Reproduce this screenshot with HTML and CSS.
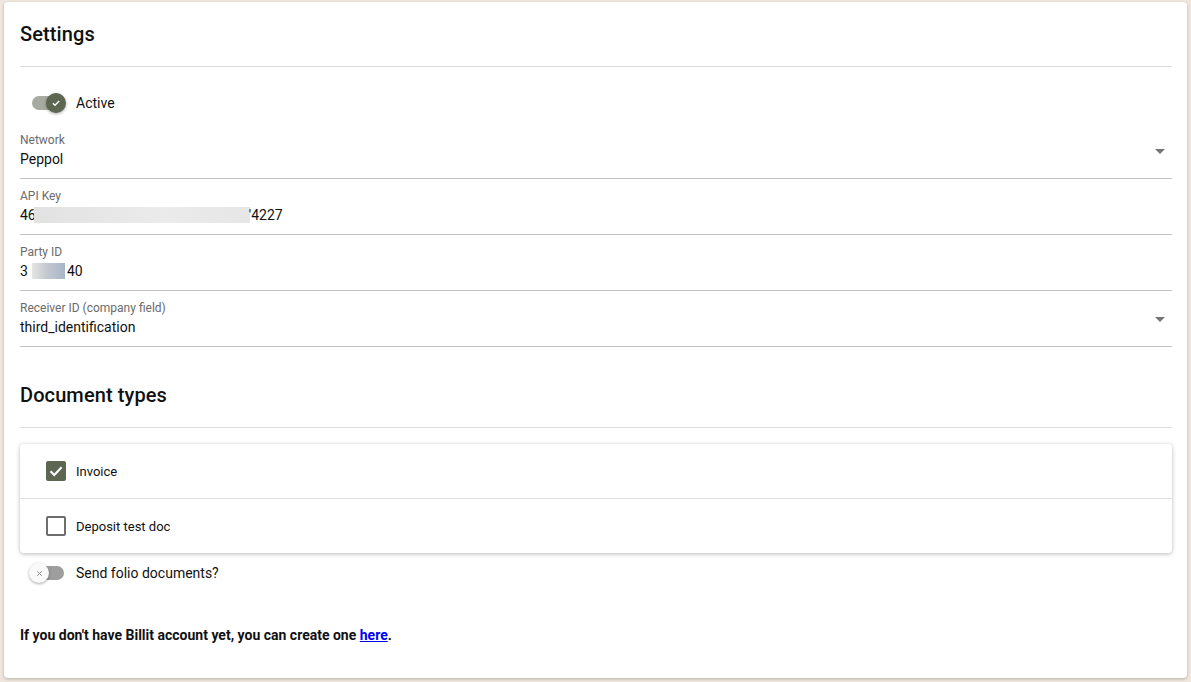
FILE: index.html
```html
<!DOCTYPE html>
<html>
<head>
<meta charset="utf-8">
<link rel="stylesheet" href="styles.css">
</head>
<body>
<div class="card">
  <h2 class="title">Settings</h2>
  <div class="divider"></div>

  <div class="toggle-row toggle-row-active">
    <span class="toggle on">
      <span class="track"></span>
      <span class="knob"><svg viewBox="0 0 12 12" width="10" height="10"><path d="M2.2 6.3 L4.8 8.8 L9.8 3.6" fill="none" stroke="#fff" stroke-width="1.6"/></svg></span>
    </span>
    <span class="toggle-label">Active</span>
  </div>

  <div class="field select">
    <div class="label">Network</div>
    <div class="value">Peppol</div>
    <span class="arrow"></span>
  </div>
  <div class="field">
    <div class="label">API Key</div>
    <div class="value">46<span class="blur blur-key"></span>'4227</div>
  </div>
  <div class="field">
    <div class="label">Party ID</div>
    <div class="value">3<span class="blur blur-party"></span>40</div>
  </div>
  <div class="field select">
    <div class="label">Receiver ID (company field)</div>
    <div class="value">third_identification</div>
    <span class="arrow"></span>
  </div>

  <h2 class="title title-docs">Document types</h2>
  <div class="divider"></div>

  <div class="list">
    <div class="list-row">
      <span class="checkbox checked"><svg viewBox="0 0 20 20" width="20" height="20"><path d="M4.5 10.2 L8.3 14 L15.6 6.3" fill="none" stroke="#fff" stroke-width="2"/></svg></span>
      <span class="list-label">Invoice</span>
    </div>
    <div class="list-row">
      <span class="checkbox"></span>
      <span class="list-label">Deposit test doc</span>
    </div>
  </div>

  <div class="toggle-row toggle-row-folio">
    <span class="toggle off">
      <span class="track"></span>
      <span class="knob"><svg viewBox="0 0 12 12" width="9" height="9"><path d="M3 3 L9 9 M9 3 L3 9" fill="none" stroke="#8a8a8a" stroke-width="1.3"/></svg></span>
    </span>
    <span class="toggle-label">Send folio documents?</span>
  </div>

  <p class="note">If you don't have Billit account yet, you can create one <a href="#">here</a>.</p>
</div>
</body>
</html>
```

FILE: styles.css
```css
* { box-sizing: border-box; }
html, body { margin: 0; padding: 0; }
body {
  background: #efe7de;
  font-family: Roboto, "Liberation Sans", sans-serif;
  color: #1a1a1a;
  padding: 2px 4px 4px 4px;
}
.card {
  background: #fff;
  border-radius: 4px;
  box-shadow: 0 1px 3px rgba(0,0,0,0.25);
  padding: 16px 15px 33px 16px;
  height: 676px;
}
.title {
  margin: 0 0 16px 0;
  font-size: 20px;
  font-weight: 500;
  line-height: 32px;
  color: #111;
  letter-spacing: 0.1px;
}
.title-docs { margin-top: 32px; }
.divider { height: 1px; background: #dedede; }

.toggle-row {
  display: flex;
  align-items: center;
  height: 24px;
}
.toggle-row-active { margin-top: 24px; margin-bottom: 8px; }
.toggle-row-folio { margin-top: 8px; }
.toggle {
  position: relative;
  width: 37px;
  height: 24px;
  margin-left: 9px;
  margin-right: 10px;
  flex: none;
}
.track {
  position: absolute;
  left: 3px;
  top: 5px;
  width: 32px;
  height: 14px;
  border-radius: 7px;
  background: #9e9e9e;
}
.toggle.on .track { background: #a7ab9f; }
.knob {
  position: absolute;
  top: 2px;
  width: 20px;
  height: 20px;
  border-radius: 50%;
  display: flex;
  align-items: center;
  justify-content: center;
  box-shadow: 0 1px 3px rgba(0,0,0,0.35);
}
.toggle.on .knob { left: 17px; background: #5c6651; }
.toggle.off .knob { left: 0; background: #fafafa; }
.toggle-label { font-size: 14px; line-height: 20px; color: #111; }

.field {
  position: relative;
  height: 56px;
  padding-top: 10px;
  border-bottom: 1px solid #c2c2c2;
}
.label {
  font-size: 12px;
  line-height: 14px;
  color: #6b6b6b;
}
.value {
  margin-top: 2px;
  font-size: 14px;
  line-height: 20px;
  color: #111;
  display: flex;
  align-items: center;
}
.blur { display: inline-block; height: 16px; }
.blur-key {
  width: 216px;
  margin-left: -2px;
  margin-right: -1px;
  background: linear-gradient(90deg, #e2e2e2, #ebebeb 60%, #e6e6e6);
}
.blur-party {
  width: 33px;
  margin-left: 4px;
  margin-right: 2px;
  background: linear-gradient(90deg, #e4e4e4, #c4c8ce 45%, #a7b6c9);
}
.arrow {
  position: absolute;
  right: 7px;
  top: 26px;
  width: 0;
  height: 0;
  border-left: 5px solid transparent;
  border-right: 5px solid transparent;
  border-top: 5px solid #757575;
}

.list {
  margin-top: 16px;
  border-radius: 4px;
  box-shadow: 0 1px 4px rgba(0,0,0,0.28);
  background: #fff;
}
.list-row {
  display: flex;
  align-items: center;
  height: 54px;
  padding-left: 26px;
}
.list-row + .list-row { border-top: 1px solid #e0e0e0; height: 55px; }
.checkbox {
  width: 20px;
  height: 20px;
  border: 2px solid #6e6e6e;
  border-radius: 2px;
  margin-right: 10px;
  flex: none;
  position: relative;
}
.checkbox.checked {
  background: #5c6651;
  border-color: #5c6651;
}
.checkbox.checked svg { position: absolute; left: -2px; top: -2px; }
.list-label { font-size: 13px; color: #111; }

.note {
  margin: 40px 0 0 0;
  font-size: 14px;
  line-height: 20px;
  font-weight: 700;
  color: #111;
}
.note a { color: #0000ee; text-decoration: underline; }
```
